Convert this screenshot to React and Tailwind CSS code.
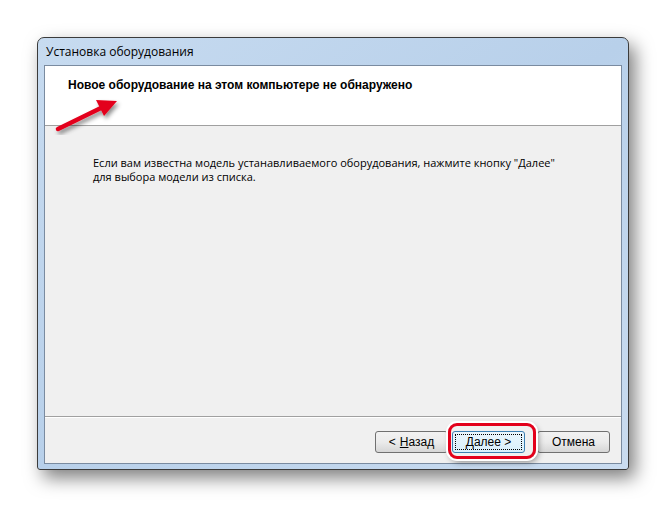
import React from "react";

const ui = { fontFamily: '"Open Sans", "Noto Sans", sans-serif' };
const tah = { fontFamily: '"Liberation Sans", Arial, sans-serif' };

function Btn({ children, primary }) {
  return (
    <button
      style={tah}
      className={`w-[73px] h-[22px] rounded-[3px] text-[12px] text-black flex items-center justify-center ${
        primary
          ? "border border-[#3c7fb1] bg-gradient-to-b from-[#eaf6fd] to-[#d9f0fc] p-[2px]"
          : "border border-[#707070] bg-gradient-to-b from-[#f2f2f2] via-[#ebebeb] to-[#d6d6d6]"
      }`}
    >
      {primary ? (
        <span className="w-full h-full border border-dotted border-black flex items-center justify-center">
          {children}
        </span>
      ) : (
        children
      )}
    </button>
  );
}

export default function App() {
  return (
    <div className="w-[666px] h-[508px] bg-white relative overflow-hidden pt-[37px] pl-[37px]">
      {/* window */}
      <div className="w-[592px] h-[433px] rounded-t-[7px] rounded-b-[3px] border border-[#3b3b3b] bg-gradient-to-br from-[#c7dbf0] via-[#b8d0ea] to-[#cadcf0] shadow-[6px_8px_18px_rgba(0,0,0,0.5)] flex flex-col px-[6px] pb-[5px]">
        <div style={ui} className="h-[27px] flex items-center pl-[2px] text-[12px] text-black">
          Установка оборудования
        </div>
        <div className="flex-1 border border-[#7a8ba0] bg-[#f0f0f0] flex flex-col">
          <div className="h-[60px] bg-white border-b border-[#a0a0a0] pl-[23px] pt-[10px]">
            <div style={tah} className="text-[12px] font-bold text-black">
              Новое оборудование на этом компьютере не обнаружено
            </div>
          </div>
          <div style={ui} className="flex-1 pl-[48px] pt-[30px] border-b border-[#a0a0a0] text-[11px] leading-[14px] text-black">
            <div>Если вам известна модель устанавливаемого оборудования, нажмите кнопку "Далее"</div>
            <div>для выбора модели из списка.</div>
          </div>
          <div className="h-[46px] border-t border-white flex items-start justify-end pt-[13px] pr-[11px]">
            <Btn>
              &lt; <span className="underline ml-1">Н</span>азад
            </Btn>
            <div className="w-[4px]" />
            <Btn primary>
              <span className="underline">Д</span>алее &gt;
            </Btn>
            <div className="w-[12px]" />
            <Btn>Отмена</Btn>
          </div>
        </div>
      </div>

      {/* red highlight around next button */}
      <div className="absolute left-[448px] top-[423px] w-[88px] h-[36px] rounded-[9px] border-[3px] border-[#e3001b] shadow-[0_0_0_2px_#ffffff,2px_3px_6px_rgba(0,0,0,0.45)]" />

      {/* red arrow */}
      <svg className="absolute left-0 top-0" width="666" height="508">
        <defs>
          <filter id="sh" x="-20%" y="-20%" width="140%" height="140%">
            <feDropShadow dx="2" dy="3" stdDeviation="2" floodColor="#000" floodOpacity="0.45" />
          </filter>
        </defs>
        <g filter="url(#sh)">
          <line x1="58" y1="129" x2="103" y2="107" stroke="#e3001b" strokeWidth="4.5" strokeLinecap="round" />
          <polygon points="117,101 96,100 104,116" fill="#e3001b" />
        </g>
      </svg>
    </div>
  );
}
